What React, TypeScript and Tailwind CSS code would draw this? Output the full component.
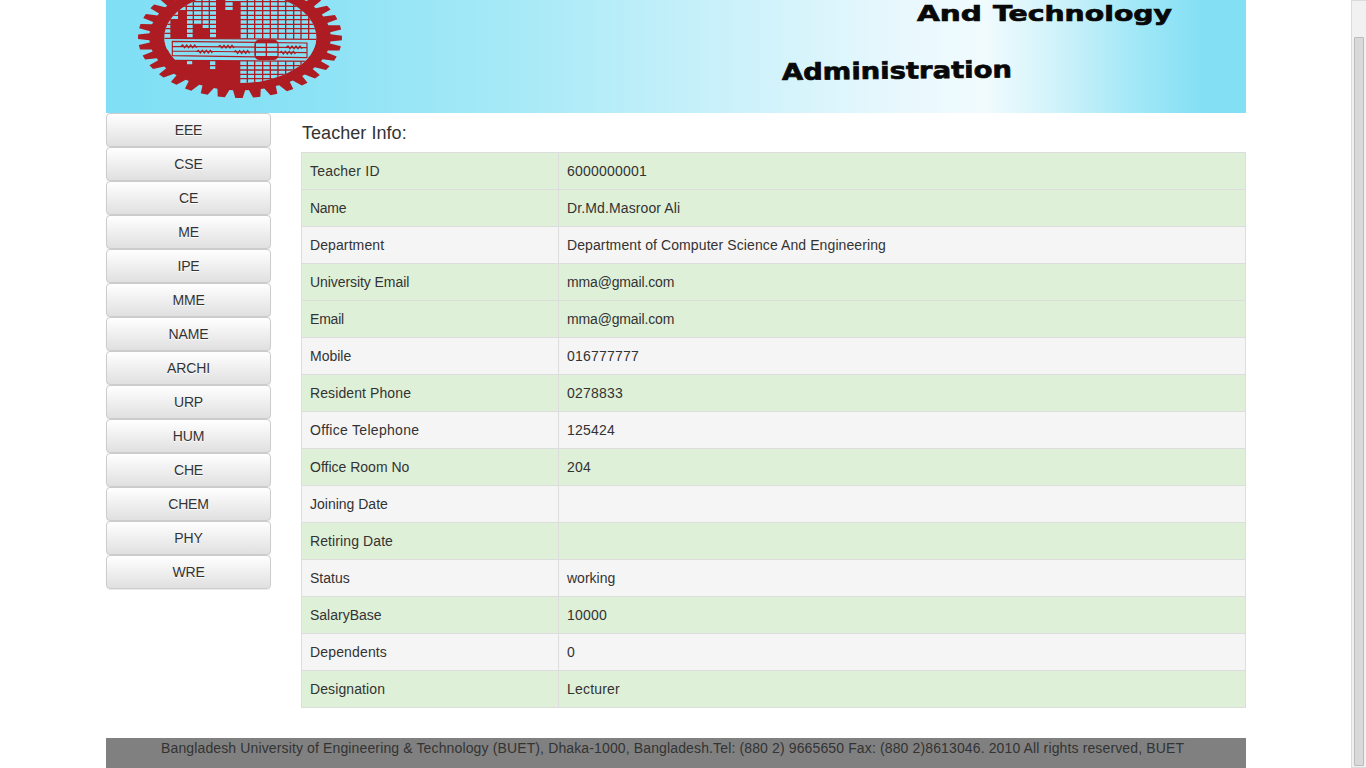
const departments = ["EEE", "CSE", "CE", "ME", "IPE", "MME", "NAME", "ARCHI", "URP", "HUM", "CHE", "CHEM", "PHY", "WRE"];

type Row = { label: string; value: string; green: boolean; lt?: string; vt?: string };

const DIGITS = "tracking-[0.21px]";

const rows: Row[] = [
  { label: "Teacher ID", value: "6000000001", green: true, lt: "tracking-[0.2px]", vt: DIGITS },
  { label: "Name", value: "Dr.Md.Masroor Ali", green: true, lt: "tracking-[-0.3px]", vt: "tracking-[0.12px]" },
  { label: "Department", value: "Department of Computer Science And Engineering", green: false, lt: "tracking-[0.1px]", vt: "tracking-[0.1px]" },
  { label: "University Email", value: "mma@gmail.com", green: true, lt: "tracking-[-0.07px]", vt: "tracking-[-0.15px]" },
  { label: "Email", value: "mma@gmail.com", green: true, lt: "tracking-[-0.2px]", vt: "tracking-[-0.15px]" },
  { label: "Mobile", value: "016777777", green: false, vt: DIGITS },
  { label: "Resident Phone", value: "0278833", green: true, lt: "tracking-[0.1px]", vt: DIGITS },
  { label: "Office Telephone", value: "125424", green: false, lt: "tracking-[0.3px]", vt: DIGITS },
  { label: "Office Room No", value: "204", green: true, vt: DIGITS },
  { label: "Joining Date", value: "", green: false },
  { label: "Retiring Date", value: "", green: true, lt: "tracking-[0.1px]" },
  { label: "Status", value: "working", green: false },
  { label: "SalaryBase", value: "10000", green: true, vt: DIGITS },
  { label: "Dependents", value: "0", green: false, lt: "tracking-[0.15px]" },
  { label: "Designation", value: "Lecturer", green: true, lt: "tracking-[0.1px]", vt: "tracking-[0.2px]" },
];

const RED = "#ac1c22";
const SKY = "#85e0f5";

// Gear outline: 36 teeth around an ellipse.
function gearPath(): string {
  const cx = 402, cy = 112;
  const pts: string[] = [];
  const at = (rx: number, ry: number, a: number) =>
    pts.push(`${(cx + rx * Math.cos(a)).toFixed(1)} ${(cy + ry * Math.sin(a)).toFixed(1)}`);
  for (let i = 0; i < 36; i++) {
    const a = (i * Math.PI) / 18 + 0.01;
    at(272, 159, a - 0.067);
    at(306, 182, a - 0.036);
    at(306, 182, a + 0.036);
    at(272, 159, a + 0.067);
  }
  return `M${pts.join("L")}Z`;
}

const zig = (x: number, y: number) => `M${x} ${y}l5 -4 6 8 6 -8 6 8 6 -8 6 8 6 -8 6 8`;
const gridY = [5, 19, 32, 46, 59, 73, 86, 100, 197, 210, 223, 236];
const gridX = [218, 241, 262, 288, 310, 424, 446, 470, 493, 516, 539, 563, 585, 608];

function Emblem() {
  return (
    <g transform="scale(0.33333)">
      <clipPath id="face"><ellipse cx="403" cy="112" rx="228" ry="137" /></clipPath>
      <path d={gearPath()} fill={RED} />
      <g clipPath="url(#face)">
        <rect x="170" y="-30" width="464" height="290" fill={SKY} />
        {gridY.map((y) => <path key={y} d={`M170 ${y}H640`} stroke={RED} strokeWidth="3.8" />)}
        {gridX.map((x) => <path key={x} d={`M${x} -30V255`} stroke={RED} strokeWidth="4" />)}
        <path d="M193 116V57H218V30H241V112H262V72H288V85H310V112H330V-30H358V32H380V5H404V116Z" fill={RED} />
        <path d="M170 182H242V193H259V182H310V208H328V182H403V260H170Z" fill={RED} />
        <path d="M170 114L640 118V184L203 181L170 150Z" fill={SKY} />
        <path d="M170 115L640 118M200 181L640 184" stroke={RED} strokeWidth="4" />
        <path d="M170 132L205 181H170Z" fill={RED} />
        <path d="M199 124L603 129V173L199 167Z M199 139L603 143M199 153L603 158" fill="none" stroke={RED} strokeWidth="3.4" />
        <path d={zig(225, 139) + zig(337, 140) + zig(541, 142) + zig(272, 155) + zig(384, 156) + zig(521, 158)} fill="none" stroke={RED} strokeWidth="4" />
      </g>
      <path d="M182 150A228 137 0 0 0 402 249" fill="none" stroke={RED} strokeWidth="6" />
      <rect x="445" y="118" width="73" height="62" rx="16" fill={RED} />
      <path d="M450 130H514V168H450Z" fill={SKY} />
      <path d="M481 128V170M448 142H516M448 156H516" stroke={RED} strokeWidth="4" />
    </g>
  );
}

function Banner() {
  return (
    <svg className="block h-[113px] w-[1140px]" viewBox="0 0 1140 113">
      <defs>
        <linearGradient id="sky">
          <stop offset="0" stopColor="#80dff5" />
          <stop offset="0.15" stopColor="#88e1f5" />
          <stop offset="0.35" stopColor="#a5e9f7" />
          <stop offset="0.59" stopColor="#d3f3fb" />
          <stop offset="0.7" stopColor="#e8f8fd" />
          <stop offset="0.77" stopColor="#f1fbfe" />
          <stop offset="0.83" stopColor="#d2f3fa" />
          <stop offset="0.9" stopColor="#a4e8f7" />
          <stop offset="0.965" stopColor="#82dff4" />
          <stop offset="1" stopColor="#82dff4" />
        </linearGradient>
      </defs>
      <rect width="1140" height="113" fill="url(#sky)" />
      <Emblem />
      <g fontFamily="'DejaVu Sans', sans-serif" fontWeight="700" fill="#080808" stroke="#080808" strokeWidth="0.7">
        <text x="811" y="20.5" fontSize="21.8" textLength="65" lengthAdjust="spacingAndGlyphs">And</text>
        <text x="887" y="20.5" fontSize="21.8" textLength="179" lengthAdjust="spacingAndGlyphs">Technology</text>
        <text x="676" y="80" fontSize="23" textLength="230" lengthAdjust="spacingAndGlyphs" transform="rotate(-0.7 676 80)">Administration</text>
      </g>
    </svg>
  );
}

export default function App() {
  return (
    <div className="flex h-[768px] w-[1366px] overflow-hidden bg-white font-['Liberation_Sans',Arial,sans-serif] text-sm leading-5 text-[#333333]">
      <div className="ml-[106px] flex w-[1140px] flex-col">
        <Banner />
        <div className="flex">
          <nav className="flex w-[165px] flex-col">
            {departments.map((d) => (
              <button
                key={d}
                className="h-[34px] rounded-[4px] border border-[#cccccc] bg-linear-to-b from-white to-[#e0e0e0] text-center tracking-[-0.15px] shadow-[inset_0_1px_0_rgba(255,255,255,0.15),0_1px_1px_rgba(0,0,0,0.075)] [text-shadow:0_1px_0_#fff]"
              >
                {d}
              </button>
            ))}
          </nav>
          <main className="ml-[30px] w-[945px] pt-[10px]">
            <h4 className="mb-[9px] pl-px text-lg leading-5 tracking-[0.05px]">Teacher Info:</h4>
            <table className="w-[945px] table-fixed border-collapse">
              <colgroup>
                <col className="w-[257px]" />
                <col />
              </colgroup>
              <tbody>
                {rows.map((r) => (
                  <tr key={r.label} className={r.green ? "h-[37px] bg-[#dff0d8]" : "h-[37px] bg-[#f5f5f5]"}>
                    <td className={`border border-[#dddddd] px-2 py-0 ${r.lt ?? ""}`}>{r.label}</td>
                    <td className={`border border-[#dddddd] px-2 py-0 ${r.vt ?? ""}`}>{r.value}</td>
                  </tr>
                ))}
              </tbody>
            </table>
          </main>
        </div>
        <footer className="mt-[30px] h-[30px] bg-[#808080] pl-[55px] tracking-[0.132px] whitespace-nowrap">
          Bangladesh University of Engineering &amp; Technology (BUET), Dhaka-1000, Bangladesh.Tel: (880 2) 9665650 Fax: (880 2)8613046. 2010 All rights reserved, BUET
        </footer>
      </div>
      <div className="ml-auto flex h-full w-[15px] flex-col border border-r-0 border-[#dbdbdb] bg-[#f1f1f1] pt-[36px] pl-[2px]">
        <div className="h-[729px] w-[10px] rounded-[1px] border border-[#bcbcbc] bg-[#d9d9d9]" />
      </div>
    </div>
  );
}
